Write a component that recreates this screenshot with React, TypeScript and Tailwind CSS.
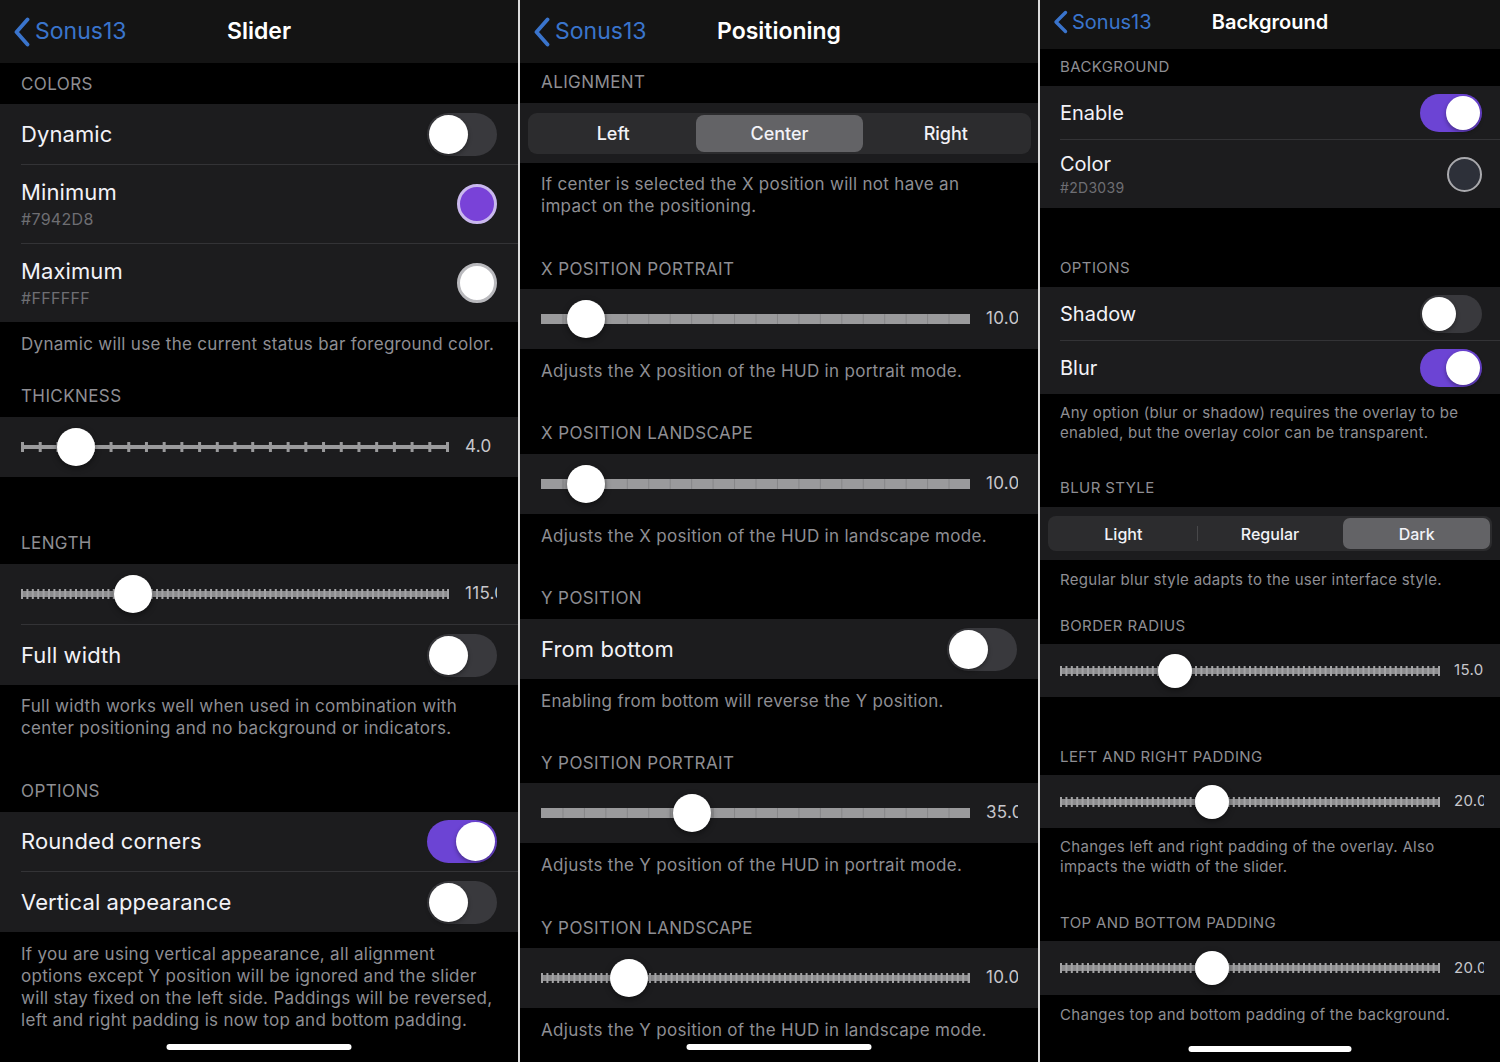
import React from "react";

const TRACK = "#9a9a9c";

function Chevron({ sm }: { sm?: boolean }) {
  return sm ? (
    <svg width="17" height="24" viewBox="0 0 17 24" className="shrink-0">
      <path d="M13.5 2.5 L4 12 L13.5 21.5" fill="none" stroke="#3a74cc" strokeWidth="3.4" strokeLinecap="round" strokeLinejoin="round" />
    </svg>
  ) : (
    <svg width="19" height="30" viewBox="0 0 19 30" className="shrink-0">
      <path d="M15.5 2.5 L4.5 15 L15.5 27.5" fill="none" stroke="#3a74cc" strokeWidth="3.8" strokeLinecap="round" strokeLinejoin="round" />
    </svg>
  );
}

function Nav({ title, sm }: { title: string; sm?: boolean }) {
  return (
    <div
      className={
        sm
          ? "h-[49px] shrink-0 bg-[#141414] grid grid-cols-[1fr_auto_1fr] items-center pb-[5px]"
          : "h-[63px] shrink-0 bg-[#141414] grid grid-cols-[1fr_auto_1fr] items-center"
      }
    >
      <div className={sm ? "flex items-center gap-[3px] pl-[12px]" : "flex items-center gap-[4px] pl-[12px]"}>
        <Chevron sm={sm} />
        <span className={sm ? "text-[20px] text-[#3a74cc]" : "text-[23px] text-[#3a74cc]"}>Sonus13</span>
      </div>
      <div className={sm ? "text-[20px] font-semibold text-white" : "text-[23px] font-semibold text-white"}>{title}</div>
      <div />
    </div>
  );
}

function Block({
  cls,
  footer,
  header,
  sm,
}: {
  cls: string;
  footer?: string[];
  header?: string;
  sm?: boolean;
}) {
  const just = footer && header ? "justify-between" : header ? "justify-end" : "justify-start";
  return (
    <div className={`shrink-0 flex flex-col ${just} ${cls} ${sm ? "pl-[20px]" : "pl-[21px]"}`}>
      {footer && (
        <div
          className={
            sm
              ? "text-[15px] leading-[19.5px] tracking-[0.3px] text-[#8e8e93]"
              : "text-[17px] leading-[22px] tracking-[0.3px] text-[#8e8e93]"
          }
        >
          {footer.map((l, i) => (
            <div key={i} className="whitespace-nowrap">
              {l}
            </div>
          ))}
        </div>
      )}
      {header && (
        <div
          className={
            sm
              ? "text-[15px] leading-[18px] tracking-[0.4px] text-[#8e8e93]"
              : "text-[17px] leading-[20px] tracking-[0.4px] text-[#8e8e93]"
          }
        >
          {header}
        </div>
      )}
    </div>
  );
}

function Sep({ sm }: { sm?: boolean }) {
  return (
    <div className={sm ? "h-px shrink-0 bg-[#1c1c1e] pl-[20px]" : "h-px shrink-0 bg-[#1c1c1e] pl-[21px]"}>
      <div className="h-px bg-[#333336]" />
    </div>
  );
}

function Toggle({ on, sm }: { on?: boolean; sm?: boolean }) {
  return (
    <div
      className={`${sm ? "w-[62px] h-[38px]" : "w-[70px] h-[43px]"} shrink-0 rounded-full p-[2px] flex ${
        on ? "bg-[#6c44d4] justify-end" : "bg-[#39393d] justify-start"
      }`}
    >
      <div className={`${sm ? "w-[34px] h-[34px]" : "w-[39px] h-[39px]"} rounded-full bg-white shadow-[0_2px_4px_rgba(0,0,0,0.35)]`} />
    </div>
  );
}

function ToggleRow({ label, on, cls, sm }: { label: string; on?: boolean; cls: string; sm?: boolean }) {
  return (
    <div
      className={`shrink-0 bg-[#1c1c1e] flex items-center justify-between ${cls} ${
        sm ? "pl-[20px] pr-[18px]" : "pl-[21px] pr-[21px]"
      }`}
    >
      <span className={sm ? "text-[20px] text-[#f2f2f7]" : "text-[22px] tracking-[0.1px] text-[#f2f2f7]"}>{label}</span>
      <Toggle on={on} sm={sm} />
    </div>
  );
}

function ColorRow({
  label,
  hex,
  fill,
  ring,
  cls,
  sm,
}: {
  label: string;
  hex: string;
  fill: string;
  ring: string;
  cls: string;
  sm?: boolean;
}) {
  return (
    <div
      className={`shrink-0 bg-[#1c1c1e] flex items-center justify-between ${cls} ${
        sm ? "pl-[20px] pr-[18px]" : "pl-[21px] pr-[21px]"
      }`}
    >
      <div className={sm ? "flex flex-col gap-[3px]" : "flex flex-col gap-[4px]"}>
        <span className={sm ? "text-[20px] leading-[24px] text-[#f2f2f7]" : "text-[22px] leading-[26px] tracking-[0.1px] text-[#f2f2f7]"}>{label}</span>
        <span
          className={
            sm
              ? "text-[14px] leading-[18px] tracking-[0.3px] text-[#6e6e73]"
              : "text-[16px] leading-[20px] tracking-[0.3px] text-[#6e6e73]"
          }
        >
          {hex}
        </span>
      </div>
      <div className={`${sm ? "w-[35px] h-[35px] border-2" : "w-[40px] h-[40px] border-[3px]"} rounded-full ${fill} ${ring}`} />
    </div>
  );
}

type Variant = "thin" | "dense" | "bar";

function Track({ w, variant, h }: { w: number; variant: Variant; h: number }) {
  const mid = h / 2;
  const els: React.ReactNode[] = [];
  if (variant === "bar") {
    els.push(<rect key="b" x={0} y={mid - 5} width={w} height={10} fill={TRACK} />);
    const step = w / 20;
    for (let i = 1; i < 20; i++) {
      els.push(<rect key={i} x={i * step} y={mid - 5} width={1} height={10} fill="#868688" />);
    }
  } else if (variant === "thin") {
    els.push(<rect key="b" x={0} y={mid - 2} width={w} height={4} fill={TRACK} />);
    const n = 24;
    const step = (w - 3) / n;
    for (let i = 0; i <= n; i++) {
      els.push(<rect key={i} x={i * step} y={mid - 5} width={3} height={10} fill={TRACK} />);
    }
  } else {
    els.push(<rect key="b" x={0} y={mid - 3} width={w} height={6} fill="#8c8c8e" />);
    const step = 5.4;
    const n = Math.floor((w - 2) / step);
    for (let i = 0; i <= n; i++) {
      els.push(<rect key={i} x={i * step} y={mid - 5} width={2} height={10} fill="#a3a3a5" />);
    }
    els.push(<rect key="end" x={w - 2} y={mid - 5} width={2} height={10} fill="#a3a3a5" />);
  }
  return (
    <svg width={w} height={h} className="block">
      {els}
    </svg>
  );
}

function SliderRow({
  variant,
  pct,
  value,
  sm,
  panel,
  cls,
}: {
  variant: Variant;
  pct: number;
  value: string;
  sm?: boolean;
  panel: 1 | 2 | 3;
  cls: string;
}) {
  const w = panel === 1 ? 428 : panel === 2 ? 429 : 380;
  const th = sm ? 34 : 38;
  return (
    <div className={`shrink-0 bg-[#1c1c1e] flex items-center ${cls} ${sm ? "pl-[20px]" : "pl-[21px]"}`}>
      <div className="relative">
        <Track w={w} variant={variant} h={th} />
        <div
          className={`absolute top-0 ${sm ? "w-[34px] h-[34px]" : "w-[38px] h-[38px]"} rounded-full bg-white shadow-[0_2px_6px_rgba(0,0,0,0.45)]`}
          style={{ left: pct * w - th / 2 }}
        />
      </div>
      <div
        className={
          sm
            ? "ml-[14px] w-[30px] overflow-hidden whitespace-nowrap text-[15px] tracking-[0.3px] text-[#c7c7cc]"
            : "ml-[16px] w-[32px] overflow-hidden whitespace-nowrap text-[17px] tracking-[0.3px] text-[#c7c7cc]"
        }
      >
        {value}
      </div>
    </div>
  );
}

function Segmented({ items, sel, sm }: { items: string[]; sel: number; sm?: boolean }) {
  return (
    <div className={sm ? "h-[53px] shrink-0 bg-[#1c1c1e] flex items-center px-[8px]" : "h-[60px] shrink-0 bg-[#1c1c1e] flex items-center pl-[8px] pr-[7px]"}>
      <div className={`${sm ? "h-[35px] rounded-[8px]" : "h-[41px] rounded-[9px]"} flex-1 bg-[#2c2c2e] p-[2px] grid grid-cols-3`}>
        {items.map((it, i) => {
          const showDiv = i > 0 && i !== sel && i - 1 !== sel;
          return (
            <div key={it} className="relative flex items-center">
              {showDiv && <div className="absolute left-0 top-[8px] bottom-[8px] w-px bg-[#48484a]" />}
              <div
                className={`flex-1 h-full flex items-center justify-center ${
                  sm ? "text-[16px] font-medium rounded-[7px]" : "text-[18px] font-medium rounded-[8px]"
                } text-[#f2f2f7] ${i === sel ? "bg-[#636366]" : ""}`}
              >
                {it}
              </div>
            </div>
          );
        })}
      </div>
    </div>
  );
}

function HomeBar({ sm }: { sm?: boolean }) {
  return (
    <div
      className={
        sm
          ? "absolute bottom-[10px] left-1/2 -translate-x-1/2 w-[163px] h-[6px] rounded-full bg-white"
          : "absolute bottom-[12px] left-1/2 -translate-x-1/2 w-[185px] h-[6px] rounded-full bg-white"
      }
    />
  );
}

function Panel1() {
  return (
    <div className="relative w-[518px] shrink-0 h-full bg-black flex flex-col overflow-hidden">
      <Nav title="Slider" />
      <Block cls="h-[41px] pb-[10px]" header="COLORS" />
      <ToggleRow label="Dynamic" cls="h-[60px]" />
      <Sep />
      <ColorRow label="Minimum" hex="#7942D8" fill="bg-[#7942D8]" ring="border-[#c9b8ee]" cls="h-[78px]" />
      <Sep />
      <ColorRow label="Maximum" hex="#FFFFFF" fill="bg-white" ring="border-[#b9b9bd]" cls="h-[78px]" />
      <Block cls="h-[95px] pt-[11px] pb-[11px]" footer={["Dynamic will use the current status bar foreground color."]} header="THICKNESS" />
      <SliderRow variant="thin" pct={0.129} value="4.0" panel={1} cls="h-[60px]" />
      <Block cls="h-[87px] pb-[11px]" header="LENGTH" />
      <SliderRow variant="dense" pct={0.262} value="115.0" panel={1} cls="h-[60px]" />
      <Sep />
      <ToggleRow label="Full width" cls="h-[60px]" />
      <Block
        cls="h-[127px] pt-[10px] pb-[11px]"
        footer={["Full width works well when used in combination with", "center positioning and no background or indicators."]}
        header="OPTIONS"
      />
      <ToggleRow label="Rounded corners" on cls="h-[59px]" />
      <Sep />
      <ToggleRow label="Vertical appearance" cls="h-[60px]" />
      <Block
        cls="pt-[11px]"
        footer={[
          "If you are using vertical appearance, all alignment",
          "options except Y position will be ignored and the slider",
          "will stay fixed on the left side. Paddings will be reversed,",
          "left and right padding is now top and bottom padding.",
        ]}
      />
      <HomeBar />
    </div>
  );
}

function Panel2() {
  return (
    <div className="relative w-[518px] shrink-0 h-full bg-black flex flex-col overflow-hidden">
      <Nav title="Positioning" />
      <Block cls="h-[40px] pb-[11px]" header="ALIGNMENT" />
      <Segmented items={["Left", "Center", "Right"]} sel={1} />
      <Block
        cls="h-[126px] pt-[10px] pb-[10px]"
        footer={["If center is selected the X position will not have an", "impact on the positioning."]}
        header="X POSITION PORTRAIT"
      />
      <SliderRow variant="bar" pct={0.105} value="10.0" panel={2} cls="h-[60px]" />
      <Block cls="h-[105px] pt-[11px] pb-[11px]" footer={["Adjusts the X position of the HUD in portrait mode."]} header="X POSITION LANDSCAPE" />
      <SliderRow variant="bar" pct={0.105} value="10.0" panel={2} cls="h-[60px]" />
      <Block cls="h-[105px] pt-[11px] pb-[11px]" footer={["Adjusts the X position of the HUD in landscape mode."]} header="Y POSITION" />
      <ToggleRow label="From bottom" cls="h-[60px]" />
      <Block cls="h-[104px] pt-[11px] pb-[10px]" footer={["Enabling from bottom will reverse the Y position."]} header="Y POSITION PORTRAIT" />
      <SliderRow variant="bar" pct={0.352} value="35.0" panel={2} cls="h-[60px]" />
      <Block cls="h-[105px] pt-[11px] pb-[10px]" footer={["Adjusts the Y position of the HUD in portrait mode."]} header="Y POSITION LANDSCAPE" />
      <SliderRow variant="dense" pct={0.205} value="10.0" panel={2} cls="h-[60px]" />
      <Block cls="pt-[11px]" footer={["Adjusts the Y position of the HUD in landscape mode."]} />
      <HomeBar />
    </div>
  );
}

function Panel3() {
  return (
    <div className="relative flex-1 h-full bg-black flex flex-col overflow-hidden">
      <Nav title="Background" sm />
      <Block sm cls="h-[37px] pb-[10px]" header="BACKGROUND" />
      <ToggleRow sm label="Enable" on cls="h-[53px]" />
      <Sep sm />
      <ColorRow sm label="Color" hex="#2D3039" fill="bg-[#2D3039]" ring="border-[#a9a9ad]" cls="h-[68px]" />
      <Block sm cls="h-[79px] pb-[10px]" header="OPTIONS" />
      <ToggleRow sm label="Shadow" cls="h-[53px]" />
      <Sep sm />
      <ToggleRow sm label="Blur" on cls="h-[53px]" />
      <Block
        sm
        cls="h-[113px] pt-[9px] pb-[10px]"
        footer={["Any option (blur or shadow) requires the overlay to be", "enabled, but the overlay color can be transparent."]}
        header="BLUR STYLE"
      />
      <Segmented sm items={["Light", "Regular", "Dark"]} sel={2} />
      <Block sm cls="h-[84px] pt-[10px] pb-[9px]" footer={["Regular blur style adapts to the user interface style."]} header="BORDER RADIUS" />
      <SliderRow sm variant="dense" pct={0.303} value="15.0" panel={3} cls="h-[53px]" />
      <Block sm cls="h-[78px] pb-[9px]" header="LEFT AND RIGHT PADDING" />
      <SliderRow sm variant="dense" pct={0.4} value="20.0" panel={3} cls="h-[53px]" />
      <Block
        sm
        cls="h-[113px] pt-[9px] pb-[9px]"
        footer={["Changes left and right padding of the overlay. Also", "impacts the width of the slider."]}
        header="TOP AND BOTTOM PADDING"
      />
      <SliderRow sm variant="dense" pct={0.4} value="20.0" panel={3} cls="h-[54px]" />
      <Block sm cls="pt-[10px]" footer={["Changes top and bottom padding of the background."]} />
      <HomeBar sm />
    </div>
  );
}

export default function App() {
  return (
    <div className="w-[1500px] h-[1062px] flex bg-black overflow-hidden font-['Inter',sans-serif] antialiased">
      <Panel1 />
      <div className="w-[2px] shrink-0 bg-[#dcdcdc]" />
      <Panel2 />
      <div className="w-[2px] shrink-0 bg-[#dcdcdc]" />
      <Panel3 />
    </div>
  );
}
